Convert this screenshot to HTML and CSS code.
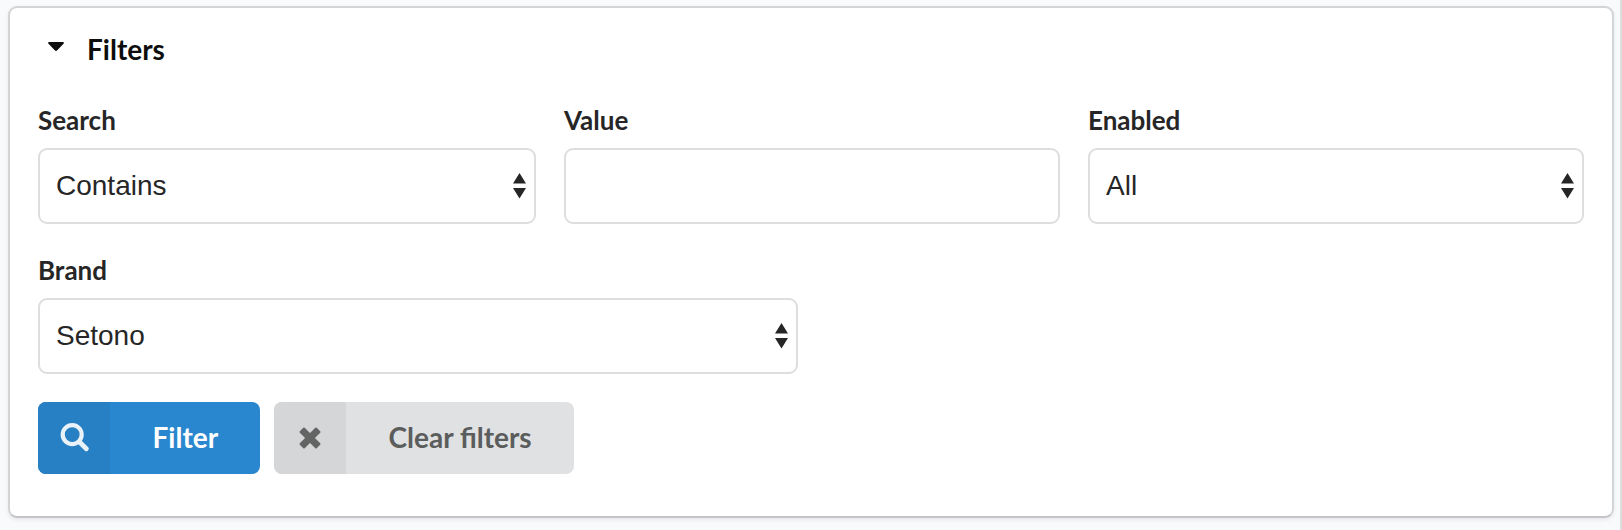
FILE: index.html
```html
<!DOCTYPE html>
<html lang="en">
<head>
<meta charset="utf-8">
<title>Filters</title>
<link rel="stylesheet" href="styles.css">
</head>
<body>
<main class="segment">
  <h2 class="title">
    <svg class="caret" width="16" height="10" viewBox="0 0 16 10"><path d="M1 0h14q1.4.5.5 1.7L9 8.5q-1 .9-2 0L.5 1.7Q-.4.5 1 0Z" fill="currentColor"/></svg>
    <span>Filters</span>
  </h2>
  <form class="form">
    <div class="fields">
      <div class="field">
        <label class="label">Search</label>
        <div class="control"><span>Contains</span><svg class="arrows" width="13" height="26" viewBox="0 0 13 26"><path d="M6.5 0 13 10.5H0ZM0 15h13L6.5 25.5Z" fill="currentColor"/></svg></div>
      </div>
      <div class="field">
        <label class="label">Value</label>
        <div class="control"></div>
      </div>
      <div class="field">
        <label class="label">Enabled</label>
        <div class="control"><span>All</span><svg class="arrows" width="13" height="26" viewBox="0 0 13 26"><path d="M6.5 0 13 10.5H0ZM0 15h13L6.5 25.5Z" fill="currentColor"/></svg></div>
      </div>
    </div>
    <div class="field brand">
      <label class="label">Brand</label>
      <div class="control"><span>Setono</span><svg class="arrows" width="13" height="26" viewBox="0 0 13 26"><path d="M6.5 0 13 10.5H0ZM0 15h13L6.5 25.5Z" fill="currentColor"/></svg></div>
    </div>
    <div class="actions">
      <button type="button" class="button primary">
        <span class="icon"><svg width="29" height="30" viewBox="0 0 29 30" fill="none" stroke="currentColor"><circle cx="12.2" cy="11.6" r="9.5" stroke-width="4.2"/><path d="m19.5 19 6.8 6.8" stroke-width="4.8" stroke-linecap="round"/></svg></span>
        <span class="text">Filter</span>
      </button>
      <button type="button" class="button">
        <span class="icon"><svg width="22" height="22" viewBox="0 0 22 22" fill="currentColor" stroke="currentColor" stroke-width="2" stroke-linejoin="round"><path d="M5 1.5 11 7.5 17 1.5 20.5 5 14.5 11 20.5 17 17 20.5 11 14.5 5 20.5 1.5 17 7.5 11 1.5 5Z"/></svg></span>
        <span class="text">Clear filters</span>
      </button>
    </div>
  </form>
</main>
</body>
</html>
```
FILE: styles.css
```css
* {
  box-sizing: border-box;
}

body {
  margin: 0;
  height: 530px;
  padding: 6px 6px 12px 8px;
  border-right: 2px solid #dcdddf;
  background: #f9fafc;
  color: #262626;
  font-family: Lato, "Liberation Sans", sans-serif;
  overflow: hidden;
}

.segment {
  height: 512px;
  padding: 24px 28px 0;
  border: 2px solid #d3d4d5;
  border-bottom-color: #c4c4c6;
  border-radius: 9px;
  background: #fff;
  box-shadow: 0 2px 4px rgba(34, 36, 38, .08);
}

.title {
  display: flex;
  align-items: center;
  gap: 23px;
  height: 34px;
  margin: 0 0 39px;
  padding-left: 10px;
  color: #0d0d0d;
  font-size: 28px;
  line-height: 34px;
}

.caret {
  margin-bottom: 5px;
}

.fields {
  display: grid;
  grid-template-columns: 498px 496px 496px;
  gap: 28px;
  margin-bottom: 31px;
}

.brand {
  width: 760px;
  margin-bottom: 28px;
}

.label {
  display: block;
  height: 43px;
  font-size: 26px;
  font-weight: 700;
  line-height: 30px;
}

.control {
  display: flex;
  align-items: center;
  justify-content: space-between;
  height: 76px;
  padding: 0 8px 0 16px;
  border: 2px solid #dedede;
  border-radius: 9px;
  font-family: "Liberation Sans", Arial, sans-serif;
  font-size: 28px;
}

.actions {
  display: flex;
  gap: 14px;
}

.button {
  display: flex;
  height: 72px;
  padding: 0;
  border: 0;
  border-radius: 8px;
  overflow: hidden;
  background: #e0e1e2;
  color: #5b5c5c;
  font-family: inherit;
  font-size: 28px;
  font-weight: 700;
  line-height: 70px;
}

.icon {
  display: flex;
  align-items: center;
  justify-content: center;
  width: 72px;
  height: 72px;
  background: #d5d6d7;
  color: #636564;
}

.text {
  padding: 0 42px 0 42.5px;
}

.primary {
  background: #2987cf;
  color: #fff;
}

.primary .icon {
  background: #277fc4;
  color: #e9f2f9;
}
```
